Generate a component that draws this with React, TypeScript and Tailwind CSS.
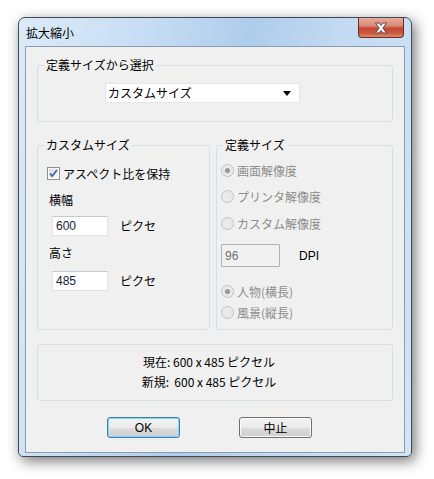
import React from "react";

const F = { fontFamily: '"Noto Sans CJK JP", "Liberation Sans", sans-serif' };

function Radio({ checked }: { checked?: boolean }) {
  return (
    <svg width="13" height="13" viewBox="0 0 13 13" className="shrink-0">
      <defs>
        <radialGradient id="rg" cx="50%" cy="50%" r="60%">
          <stop offset="0%" stopColor="#e6e6e6" />
          <stop offset="100%" stopColor="#f7f7f7" />
        </radialGradient>
      </defs>
      <circle cx="6.5" cy="6.5" r="6" fill="url(#rg)" stroke="#bcbcbc" strokeWidth="1" />
      <circle cx="6.5" cy="6.5" r="4.3" fill="none" stroke="#dcdcdc" strokeWidth="0.8" />
      {checked && <circle cx="6.5" cy="6.5" r="2.6" fill="#9a9a9a" />}
    </svg>
  );
}

function Checkbox() {
  return (
    <svg width="13" height="13" viewBox="0 0 13 13" className="shrink-0">
      <defs>
        <linearGradient id="cg" x1="0" y1="0" x2="1" y2="1">
          <stop offset="0%" stopColor="#dcdcdc" />
          <stop offset="100%" stopColor="#f8f8f8" />
        </linearGradient>
      </defs>
      <rect x="0.5" y="0.5" width="12" height="12" fill="#fdfdfd" stroke="#8e8f8f" />
      <rect x="2" y="2" width="9" height="9" fill="url(#cg)" />
      <path d="M3 6.5 L5.2 9 L10 3" fill="none" stroke="#4c61a6" strokeWidth="1.8" />
    </svg>
  );
}

function Legend({ children }: { children: React.ReactNode }) {
  return <legend className="ml-[6px] px-[2px] text-[12px] leading-[14px] text-black">{children}</legend>;
}

function Input({ value, w }: { value: string; w: string }) {
  return (
    <div
      className={`${w} h-[20px] bg-white border border-[#dfe3e8] border-t-[#c5cad1] flex items-center pl-[3px] text-[12px] text-[#1a1a3a]`}
      style={{ fontFamily: '"Liberation Sans", sans-serif' }}
    >
      {value}
    </div>
  );
}

export default function App() {
  return (
    <div className="w-[434px] h-[479px] bg-white pt-[17px] pl-[18px]" style={F}>
      <div className="w-[394px] h-[440px] flex flex-col rounded-t-[7px] rounded-b-[5px] border border-[#3f4a55] bg-[linear-gradient(100deg,#dbeaf8_0%,#c9def4_25%,#aecdec_50%,#c3daf2_70%,#d3e5f6_100%)] shadow-[3px_4px_14px_rgba(0,0,0,0.55)]">
        {/* title bar */}
        <div className="h-[28px] flex justify-between items-start pl-[7px] pr-[7px]">
          <div className="text-[12px] leading-[14px] mt-[8px] text-black">拡大縮小</div>
          <div className="w-[46px] h-[20px] rounded-b-[4px] border border-[#6e2c22] border-t-0 bg-[linear-gradient(180deg,#e9a99a_0%,#d98a78_40%,#c24a32_55%,#c9593f_80%,#e08a6e_100%)] flex items-center justify-center">
            <svg width="14" height="12" viewBox="0 0 14 12">
              <path
                d="M1.5 1 H5 L7 3.5 L9 1 H12.5 L8.8 6 L12.5 11 H9 L7 8.5 L5 11 H1.5 L5.2 6 Z"
                fill="#ffffff"
                stroke="#5a4a4a"
                strokeWidth="1"
                strokeLinejoin="round"
              />
            </svg>
          </div>
        </div>
        {/* client */}
        <div className="mx-[6px] mb-[3px] flex-1 border border-[#8a9db0] bg-[#f0f0f0] flex flex-col pl-[11px] text-[12px] text-black">
          {/* group 1 */}
          <fieldset className="mt-[11px] w-[356px] h-[64px] border border-[#d5dfe5] rounded-[3px] flex flex-col">
            <Legend>定義サイズから選択</Legend>
            <div className="ml-[67px] mt-[11px] w-[195px] h-[20px] bg-white border border-[#e2e5ea] flex items-center justify-between pl-[2px] pr-[8px] text-[12px]">
              <span>カスタムサイズ</span>
              <svg width="8" height="5" viewBox="0 0 8 5">
                <path d="M0 0 H8 L4 5 Z" fill="#000" />
              </svg>
            </div>
          </fieldset>

          {/* groups row */}
          <div className="mt-[16px] flex gap-[6px]">
            <fieldset className="w-[173px] h-[192px] border border-[#d5dfe5] rounded-[3px] flex flex-col">
              <Legend>カスタムサイズ</Legend>
              <div className="ml-[9px] mt-[15px] flex items-center gap-[3px] h-[13px] leading-[14px]">
                <Checkbox />
                <span>アスペクト比を保持</span>
              </div>
              <div className="ml-[11px] mt-[13px] leading-[14px]">横幅</div>
              <div className="ml-[14px] mt-[9px] flex items-center gap-[12px]">
                <Input value="600" w="w-[56px]" />
                <span>ピクセ</span>
              </div>
              <div className="ml-[11px] mt-[10px] leading-[14px]">高さ</div>
              <div className="ml-[14px] mt-[11px] flex items-center gap-[12px]">
                <Input value="485" w="w-[56px]" />
                <span>ピクセ</span>
              </div>
            </fieldset>

            <fieldset className="w-[177px] h-[192px] border border-[#d5dfe5] rounded-[3px] flex flex-col text-[#8d8d8d]">
              <Legend>定義サイズ</Legend>
              <div className="ml-[4px] mt-[12px] flex items-center gap-[3px] h-[13px]">
                <Radio checked />
                <span>画面解像度</span>
              </div>
              <div className="ml-[4px] mt-[13px] flex items-center gap-[3px] h-[13px]">
                <Radio />
                <span>プリンタ解像度</span>
              </div>
              <div className="ml-[4px] mt-[14px] flex items-center gap-[3px] h-[13px]">
                <Radio />
                <span>カスタム解像度</span>
              </div>
              <div className="ml-[4px] mt-[14px] flex items-center gap-[19px]">
                <div
                  className="w-[59px] h-[23px] border border-[#aeb2b6] rounded-[1px] bg-[#f0f0f0] flex items-center pl-[3px] text-[#707070]"
                  style={{ fontFamily: '"Liberation Sans", sans-serif' }}
                >
                  96
                </div>
                <span className="text-black" style={{ fontFamily: '"Liberation Sans", sans-serif' }}>
                  DPI
                </span>
              </div>
              <div className="ml-[4px] mt-[18px] flex items-center gap-[3px] h-[13px]">
                <Radio checked />
                <span>人物(横長)</span>
              </div>
              <div className="ml-[4px] mt-[8px] flex items-center gap-[3px] h-[13px]">
                <Radio />
                <span>風景(縦長)</span>
              </div>
            </fieldset>
          </div>

          {/* info group */}
          <div className="mt-[14px] w-[356px] h-[57px] border border-[#d5dfe5] rounded-[3px] flex flex-col items-center pt-[7px] pr-[12px] leading-[20px]">
            <div>現在: 600 x 485 ピクセル</div>
            <div>新規:&nbsp; 600 x 485 ピクセル</div>
          </div>

          {/* buttons */}
          <div className="mt-[16px] flex">
            <div className="ml-[70px] w-[73px] h-[21px] rounded-[3px] border border-[#3c7fb1] shadow-[inset_0_0_0_1px_#7fd8f5] bg-[linear-gradient(180deg,#f2f2f2_0%,#ebebeb_50%,#dddddd_51%,#cfcfcf_100%)] flex items-center justify-center">
              <span style={{ fontFamily: '"Liberation Sans", sans-serif' }}>OK</span>
            </div>
            <div className="ml-[59px] w-[73px] h-[21px] rounded-[3px] border border-[#707070] shadow-[inset_0_0_0_1px_#fcfcfc] bg-[linear-gradient(180deg,#f2f2f2_0%,#ebebeb_50%,#dddddd_51%,#cfcfcf_100%)] flex items-center justify-center">
              <span>中止</span>
            </div>
          </div>
        </div>
      </div>
    </div>
  );
}
